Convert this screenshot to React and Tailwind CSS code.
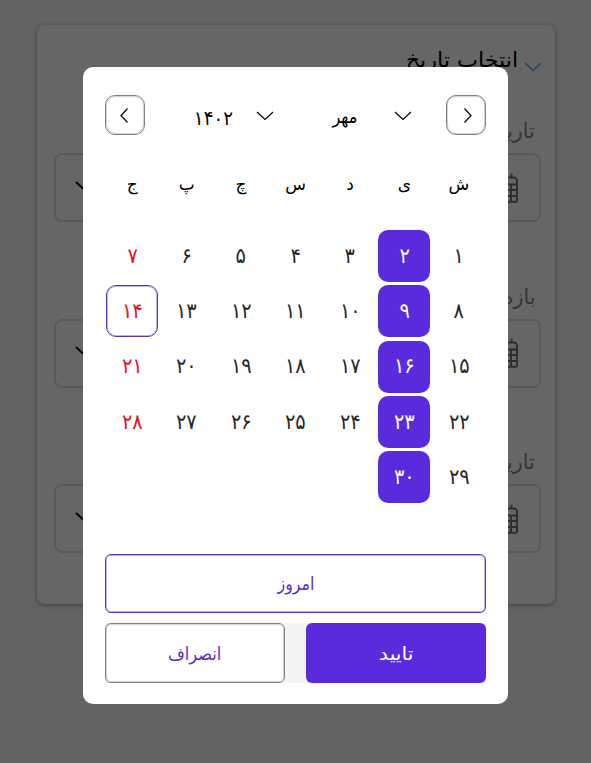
const weekdays = ['ش', 'ی', 'د', 'س', 'چ', 'پ', 'ج'];
const weeks = [
  ['۱', '۲', '۳', '۴', '۵', '۶', '۷'],
  ['۸', '۹', '۱۰', '۱۱', '۱۲', '۱۳', '۱۴'],
  ['۱۵', '۱۶', '۱۷', '۱۸', '۱۹', '۲۰', '۲۱'],
  ['۲۲', '۲۳', '۲۴', '۲۵', '۲۶', '۲۷', '۲۸'],
  ['۲۹', '۳۰'],
];

const greyOutline = 'border border-[#808080] shadow-[inset_0_0_0_1px_#d4d4d4]';
const purpleOutline = 'border border-[#5b35b5] shadow-[inset_0_0_0_1px_#c3b4e6]';

function Chevron({ className, d = 'M1 1 L9 8.5 L17 1', box = '0 0 18 10', width = 1.2 }) {
  return (
    <svg className={className} viewBox={box} fill="none" stroke="currentColor" strokeWidth={width}>
      <path d={d} />
    </svg>
  );
}

function CalendarIcon() {
  return (
    <svg className="h-[30px] w-[26px] text-[#707070]" viewBox="0 0 26 30" fill="none" stroke="currentColor" strokeWidth="1.9">
      <path d="M6.500 0.500v4.500M19.500 0.500v4.500M4 4.500h18a3 3 0 0 1 3 3v20a1.300 1.300 0 0 1-1.300 1.300h-21.400a1.300 1.300 0 0 1-1.300-1.300v-20a3 3 0 0 1 3-3zM1 11.500h24M1 17h24M1 23h24M7 11.500v17M13 11.500v17M19 11.500v17" />
    </svg>
  );
}

function Field({ label }) {
  return (
    <div className="h-[165.500px]">
      <div className="flex h-[38px] items-center pr-[6px] text-[21px] text-[#888888]">
        <span className="origin-right scale-x-[0.98]">{label}</span>
      </div>
      <div className="mt-[2px] ml-[3px] flex h-[69px] items-center justify-between rounded-lg border-2 border-[#dedede] pr-[21px] pl-[19px]">
        <CalendarIcon />
        <Chevron className="-mt-1 h-[10px] w-[18px] text-black" width={1.9} />
      </div>
    </div>
  );
}

function Day({ value, column }) {
  let tone = 'text-[#262626]';
  if (column === 6) tone = 'text-[#e0141e]';
  if (column === 1) tone = 'bg-[#5a2bdd] text-white';
  const ring = value === '۱۴' ? purpleOutline : '';
  return (
    <div className={`flex size-[52px] items-center justify-center rounded-[10px] pt-px ${tone} ${ring}`}>
      <span className="scale-x-[0.92]">{value}</span>
    </div>
  );
}

function Picker() {
  return (
    <div className="h-[637px] w-[425px] rounded-[10px] bg-white px-[22px] pt-7 text-black">
      <div className="flex h-10 items-center">
        <button className={`flex size-10 items-center justify-center rounded-[10px] pl-[3px] ${greyOutline}`}>
          <Chevron className="h-[15px] w-2" box="0 0 8 15" d="M0.5 0.5 L7 7.5 L0.5 14.5" />
        </button>
        <Chevron className="mr-[34px] mt-[2px] h-[10px] w-[18px]" />
        <span className="mr-[37px] w-[25px] pt-[2px] text-[19px] whitespace-nowrap">
          <span className="inline-block origin-right scale-x-[0.85]">مهر</span>
        </span>
        <Chevron className="mr-[58px] mt-[2px] h-[10px] w-[18px]" />
        <span className="mr-[23px] w-[40px] pt-[6px] text-[20px] whitespace-nowrap">
          <span className="inline-block origin-right scale-x-[0.91]">۱۴۰۲</span>
        </span>
        <button className={`mr-auto flex size-10 items-center justify-center rounded-[10px] pr-[2px] ${greyOutline}`}>
          <Chevron className="h-[15px] w-2" box="0 0 8 15" d="M7.5 0.5 L1 7.5 L7.5 14.5" />
        </button>
      </div>
      <div className="mt-[35px] grid h-[30px] grid-cols-7 items-center text-center text-[17px]">
        {weekdays.map((day) => (
          <span key={day}>{day}</span>
        ))}
      </div>
      <div className="mt-[30px] flex h-[324px] flex-col gap-[3.300px] text-[21px]">
        {weeks.map((week) => (
          <div key={week[0]} className="grid grid-cols-7 justify-items-center">
            {week.map((value, column) => (
              <Day key={value} value={value} column={column} />
            ))}
          </div>
        ))}
      </div>
      <button className={`flex h-[59px] w-full items-center justify-center rounded-md text-[18px] text-[#5b2fc4] ${purpleOutline}`}>
        <span className="scale-x-[0.88]">امروز</span>
      </button>
      <div className="mt-[10px] flex h-[60px] justify-between bg-[#f4f4f4]">
        <button className="flex w-[180px] items-center justify-center rounded-md bg-[#5a2bdd] text-[18px] text-white">
          <span className="scale-x-[1.14]">تایید</span>
        </button>
        <button className={`flex w-[180px] items-center justify-center rounded-md bg-white text-[18px] text-[#5b2fc4] ${greyOutline}`}>
          <span className="scale-x-[0.9]">انصراف</span>
        </button>
      </div>
    </div>
  );
}

export default function App() {
  return (
    <div dir="rtl" className="relative h-[763px] w-[591px] overflow-hidden bg-[#f7f7f7] px-9 pt-[25px] font-['DejaVu_Sans',sans-serif]">
      <div className="ml-[1px] h-[579px] rounded-lg bg-white px-[14px] pt-5 shadow-[0_1px_5px_rgba(0,0,0,0.4)]">
        <div className="flex h-[68px] items-start">
          <Chevron className="-mr-px mt-[17px] h-[10px] w-[18px] text-[#5cb0ff]" width={1.7} />
          <span className="mr-[6px] origin-right scale-x-[1.06] text-[21px] whitespace-nowrap">انتخاب تاریخ</span>
        </div>
        <Field label="تاریخ" />
        <Field label="بازه" />
        <Field label="تاریخ" />
      </div>
      <div className="absolute inset-0 flex items-start justify-end bg-black/60 pt-[67px] pl-[83px]">
        <Picker />
      </div>
    </div>
  );
}
